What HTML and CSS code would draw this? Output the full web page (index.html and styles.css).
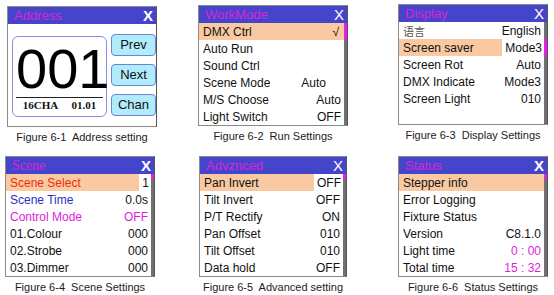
FILE: index.html
```html
<!doctype html>
<html>

<head>
  <meta charset="UTF-8" />
  <link rel="stylesheet" href="styles.css">
</head>

<body>
  <div class="sheet">
    <!-- 6-1 address -->
    <figure class="fig fig-1">
      <div class="screen">
        <div class="titlebar"><span class="title">Address</span><span class="close bold">X</span></div>
        <div class="addr">
          <div class="addr-box">
            <div class="addr-num">001</div>
            <div class="addr-info"><span>16CHA</span><span>01.01</span></div>
          </div>
          <div class="addr-btns">
            <div class="btn">Prev</div>
            <div class="btn">Next</div>
            <div class="btn">Chan</div>
          </div>
        </div>
      </div>
      <figcaption>Figure 6-1&nbsp; Address setting</figcaption>
    </figure>

    <!-- 6-2 work mode -->
    <figure class="fig fig-2">
      <div class="screen">
        <div class="titlebar"><span class="title">WorkMode</span><span class="close">X</span></div>
        <div class="panel-body">
          <div class="rows">
            <div class="row sel"><span>DMX Ctrl</span><span class="val tick">√</span></div>
            <div class="row"><span>Auto Run</span></div>
            <div class="row"><span>Sound Ctrl</span></div>
            <div class="row"><span>Scene Mode</span><span class="val indent">Auto</span></div>
            <div class="row"><span>M/S Choose</span><span class="val">Auto</span></div>
            <div class="row"><span>Light Switch</span><span class="val">OFF</span></div>
          </div>
          <div class="track"><div class="thumb thumb-row"></div></div>
        </div>
      </div>
      <figcaption>Figure 6-2&nbsp; Run Settings</figcaption>
    </figure>

    <!-- 6-3 display -->
    <figure class="fig fig-3">
      <div class="screen">
        <div class="titlebar"><span class="title">Display</span><span class="close">X</span></div>
        <div class="panel-body">
          <div class="rows">
            <div class="row"><span class="cjk">语言</span><span class="val">English</span></div>
            <div class="row sel boxed"><span>Screen saver</span><span class="val box">Mode3</span></div>
            <div class="row"><span>Screen Rot</span><span class="val">Auto</span></div>
            <div class="row"><span>DMX Indicate</span><span class="val">Mode3</span></div>
            <div class="row"><span>Screen Light</span><span class="val">010</span></div>
          </div>
          <div class="track"><div class="thumb thumb-row second"></div></div>
        </div>
      </div>
      <figcaption>Figure 6-3&nbsp; Display Settings</figcaption>
    </figure>

    <!-- 6-4 scene -->
    <figure class="fig fig-4">
      <div class="screen">
        <div class="titlebar"><span class="title serif">Scene</span><span class="close bold">X</span></div>
        <div class="panel-body">
          <div class="rows">
            <div class="row sel boxed red"><span>Scene Select</span><span class="val box">1</span></div>
            <div class="row blue"><span>Scene Time</span><span class="val">0.0s</span></div>
            <div class="row pink"><span>Control Mode</span><span class="val">OFF</span></div>
            <div class="row"><span>01.Colour</span><span class="val">000</span></div>
            <div class="row"><span>02.Strobe</span><span class="val">000</span></div>
            <div class="row"><span>03.Dimmer</span><span class="val">000</span></div>
          </div>
          <div class="track"><div class="thumb thumb-short"></div></div>
        </div>
      </div>
      <figcaption>Figure 6-4&nbsp; Scene Settings</figcaption>
    </figure>

    <!-- 6-5 advanced -->
    <figure class="fig fig-5">
      <div class="screen">
        <div class="titlebar"><span class="title">Advznced</span><span class="close">X</span></div>
        <div class="panel-body">
          <div class="rows">
            <div class="row sel boxed"><span>Pan Invert</span><span class="val box">OFF</span></div>
            <div class="row"><span>Tilt Invert</span><span class="val">OFF</span></div>
            <div class="row"><span>P/T Rectify</span><span class="val">ON</span></div>
            <div class="row"><span>Pan Offset</span><span class="val">010</span></div>
            <div class="row"><span>Tilt Offset</span><span class="val">010</span></div>
            <div class="row"><span>Data hold</span><span class="val">OFF</span></div>
          </div>
          <div class="track"><div class="thumb thumb-short"></div></div>
        </div>
      </div>
      <figcaption>Figure 6-5&nbsp; Advanced setting</figcaption>
    </figure>

    <!-- 6-6 status -->
    <figure class="fig fig-6">
      <div class="screen">
        <div class="titlebar"><span class="title">Status</span><span class="close bold">X</span></div>
        <div class="panel-body">
          <div class="rows">
            <div class="row sel"><span>Stepper info</span></div>
            <div class="row"><span>Error Logging</span></div>
            <div class="row"><span>Fixture Status</span></div>
            <div class="row"><span>Version</span><span class="val">C8.1.0</span></div>
            <div class="row"><span>Light time</span><span class="val pink">0 : 00</span></div>
            <div class="row"><span>Total time</span><span class="val pink">15 : 32</span></div>
          </div>
          <div class="track"><div class="thumb thumb-short"></div></div>
        </div>
      </div>
      <figcaption>Figure 6-6&nbsp; Status Settings</figcaption>
    </figure>
  </div>
</body>

</html>
```

FILE: styles.css
```css
body {
  margin: 0;
  padding: 0;
  background-color: #FFFFFF;
  font-family: "Liberation Sans", Arial, sans-serif;
  color: #111111;
}

.sheet {
  display: grid;
  grid-template-columns: 192px 200px 150px;
  grid-template-rows: 151px 140px;
  padding: 5px 0 0 6px;
}

.fig {
  margin: 0;
  width: 150px;
}

.fig-1 {
  margin: 1px 0 0 1px;
}

.fig-4 {
  margin-left: -1px;
}

.fig-5 {
  margin-left: 1px;
  width: 148px;
}

.fig-3 {
  margin-top: -1px;
}

.screen {
  border: 1px solid #8a8a8a;
  border-right-color: #555555;
  background-color: #FFFFFF;
}

.titlebar {
  height: 17px;
  background-color: #4545cc;
  display: flex;
  align-items: center;
  justify-content: space-between;
  padding: 0 3px 0 6px;
}

.title {
  color: #dd22d6;
  font-size: 13px;
  line-height: 17px;
}

.title.serif {
  font-family: "Liberation Serif", "Times New Roman", serif;
  font-size: 14px;
}

.close {
  color: #FFFFFF;
  font-size: 15px;
  line-height: 17px;
}

.close.bold {
  font-weight: 700;
}

figcaption {
  margin-top: 4px;
  font-size: 11px;
  line-height: 12px;
  color: #1c1c1c;
  text-align: center;
  white-space: nowrap;
}

/* address screen */

.addr {
  height: 102px;
  box-sizing: border-box;
  display: flex;
  gap: 4px;
  padding: 10px 0 0 4px;
}

.addr-box {
  width: 95px;
  height: 81px;
  box-sizing: border-box;
  margin-top: 2px;
  border: 1px solid #8c8ce6;
  border-radius: 6px;
  padding: 4px 3px 0;
}

.addr-num {
  font-size: 56px;
  line-height: 56px;
  text-align: center;
  color: #000000;
}

.addr-info {
  border-top: 1.5px solid #222222;
  display: flex;
  justify-content: space-around;
  font-family: "Liberation Serif", "Times New Roman", serif;
  font-weight: 700;
  font-size: 11px;
  line-height: 14px;
}

.addr-btns {
  display: flex;
  flex-direction: column;
  gap: 8px;
  width: 45px;
}

.btn {
  height: 22px;
  box-sizing: border-box;
  background-color: #b0ecfc;
  border: 1px solid #6b86d4;
  border-radius: 4px;
  font-size: 13px;
  line-height: 20px;
  text-align: center;
}

/* list screens */

.panel-body {
  display: flex;
  height: 102px;
}

.rows {
  flex: 1;
}

.row {
  height: 17px;
  display: flex;
  align-items: center;
  justify-content: space-between;
  padding: 0 3px 0 4px;
  font-size: 12px;
  white-space: nowrap;
}

.row.sel {
  background-color: #f9c9a1;
}

.row.boxed {
  padding-right: 0;
}

.val.box {
  align-self: stretch;
  display: flex;
  align-items: center;
  background-color: #FFFFFF;
  padding: 0 2px 0 3px;
}

.val.tick {
  padding-right: 2px;
}

.val.indent {
  margin-right: 15px;
}

.cjk {
  font-family: "Noto Sans CJK SC", sans-serif;
  font-size: 11px;
  color: #555555;
}

.red {
  color: #f02c10;
}

.red .val {
  color: #111111;
}

.blue {
  color: #2830c0;
}

.blue .val {
  color: #111111;
}

.pink {
  color: #e01ed8;
}

.track {
  width: 3px;
  background-color: #707070;
}

.thumb {
  background-color: #e81ee8;
}

.thumb-row {
  height: 17px;
}

.thumb-row.second {
  margin-top: 17px;
}

.thumb-short {
  height: 5px;
}
```
